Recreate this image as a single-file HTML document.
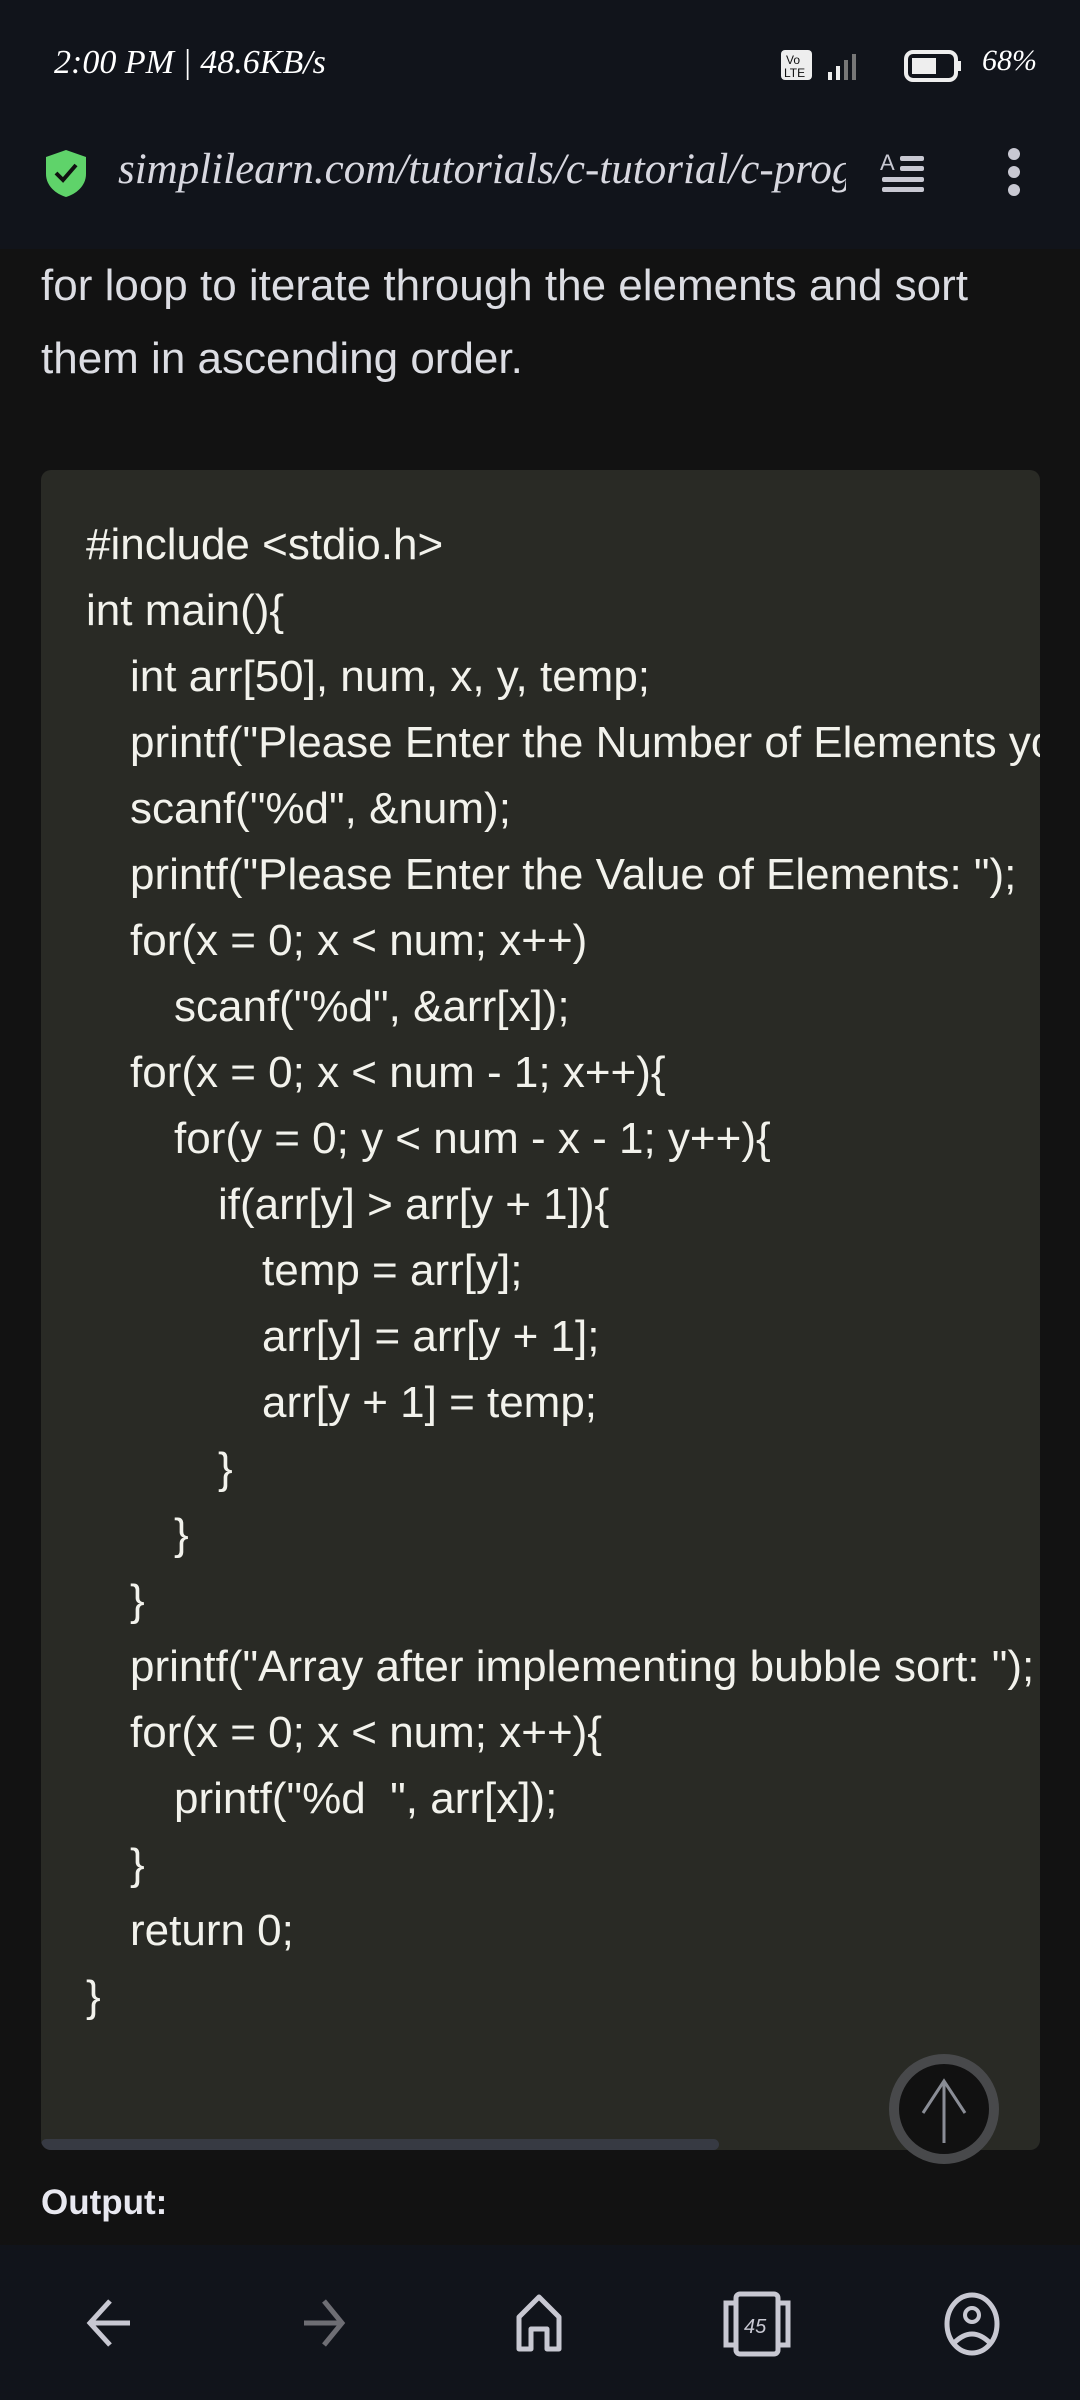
<!DOCTYPE html>
<html><head><meta charset="utf-8"><style>
*{margin:0;padding:0;box-sizing:border-box}
body{width:1080px;height:2400px;background:#121212;font-family:"Liberation Sans",sans-serif;position:relative;overflow:hidden;color:#e6e6ea}
.hdr{position:absolute;left:0;top:0;width:1080px;height:249px;background:#11141b}
.st{position:absolute;top:44px;font-size:34px;font-style:italic;color:#fff;font-family:"Liberation Serif",serif}
.url{position:absolute;left:118px;top:145px;font-size:43px;font-style:italic;color:#d8d8e0;font-family:"Liberation Serif",serif;white-space:nowrap;width:728px;overflow:hidden}
.p{position:absolute;left:41px;font-size:44px;color:#dcdde3}
.code{position:absolute;left:41px;top:470px;width:999px;height:1680px;background:#292a25;border-radius:10px;overflow:hidden}
.cd{position:absolute;left:45px;top:42px;font-family:"Liberation Sans",sans-serif;font-size:44px;line-height:66px;color:#f2f2ec;white-space:nowrap}
.cd div{white-space:pre}
.i1{padding-left:44px}.i2{padding-left:88px}.i3{padding-left:132px}.i4{padding-left:176px}
.sb{position:absolute;left:0;bottom:0;width:678px;height:11px;background:#373a43;border-radius:6px}
.nav{position:absolute;left:0;top:2245px;width:1080px;height:155px;background:#11141b}
</style></head><body>
<div class="hdr">
<div class="st" style="left:54px">2:00 PM | 48.6KB/s</div>
<div class="st" style="left:982px;font-size:30px">68%</div>
<svg style="position:absolute;left:780px;top:46px" width="190" height="40">
<rect x="1" y="4" width="31" height="30" rx="4" fill="#eee"/><text x="6" y="18" font-size="12" font-family="Liberation Sans" fill="#111">Vo</text><text x="4" y="31" font-size="12" font-family="Liberation Sans" fill="#111">LTE</text>
<rect x="48" y="26" width="4" height="8" fill="#eee"/><rect x="56" y="20" width="4" height="14" fill="#eee"/><rect x="64" y="14" width="4" height="20" fill="#777"/><rect x="72" y="8" width="4" height="26" fill="#777"/>
<rect x="126" y="6" width="50" height="28" rx="7" fill="none" stroke="#eee" stroke-width="4"/><rect x="132" y="12" width="24" height="16" fill="#eee"/><rect x="178" y="15" width="3" height="10" fill="#eee"/>
</svg>
<svg style="position:absolute;left:44px;top:148px" width="44" height="50"><path d="M22 2 L42 9 V26 C42 38 32 46 22 49 C12 46 2 38 2 26 V9 Z" fill="#5fd36a"/><path d="M12 25 L19 32 L32 17" stroke="#111" stroke-width="4" fill="none"/></svg>
<div class="url">simplilearn.com/tutorials/c-tutorial/c-prog</div>
<svg style="position:absolute;left:880px;top:150px" width="48" height="46"><text x="0" y="20" font-size="22" font-family="Liberation Sans" fill="#c8c8d2">A</text><rect x="20" y="6" width="24" height="5" rx="2" fill="#c8c8d2"/><rect x="20" y="16" width="24" height="5" rx="2" fill="#c8c8d2"/><rect x="2" y="27" width="42" height="5" rx="2" fill="#c8c8d2"/><rect x="2" y="37" width="42" height="5" rx="2" fill="#c8c8d2"/></svg>
<svg style="position:absolute;left:1000px;top:146px" width="30" height="54"><circle cx="14" cy="8" r="6" fill="#c8c8d2"/><circle cx="14" cy="26" r="6" fill="#c8c8d2"/><circle cx="14" cy="44" r="6" fill="#c8c8d2"/></svg>
</div>
<div class="p" style="top:261px">for loop to iterate through the elements and sort</div>
<div class="p" style="top:334px">them in ascending order.</div>
<div class="code"><div class="cd"><div>#include &lt;stdio.h&gt;</div><div>int main(){</div><div class="i1">int arr[50], num, x, y, temp;</div><div class="i1">printf("Please Enter the Number of Elements you want in the array: ");</div><div class="i1">scanf("%d", &amp;num);</div><div class="i1">printf("Please Enter the Value of Elements: ");</div><div class="i1">for(x = 0; x &lt; num; x++)</div><div class="i2">scanf("%d", &amp;arr[x]);</div><div class="i1">for(x = 0; x &lt; num - 1; x++){</div><div class="i2">for(y = 0; y &lt; num - x - 1; y++){</div><div class="i3">if(arr[y] &gt; arr[y + 1]){</div><div class="i4">temp = arr[y];</div><div class="i4">arr[y] = arr[y + 1];</div><div class="i4">arr[y + 1] = temp;</div><div class="i3">}</div><div class="i2">}</div><div class="i1">}</div><div class="i1">printf("Array after implementing bubble sort: ");</div><div class="i1">for(x = 0; x &lt; num; x++){</div><div class="i2">printf("%d  ", arr[x]);</div><div class="i1">}</div><div class="i1">return 0;</div><div>}</div></div><div class="sb"></div></div>
<svg style="position:absolute;left:888px;top:2053px" width="112" height="112"><circle cx="56" cy="56" r="50" fill="#111" stroke="#48494b" stroke-width="10"/><path d="M56 90 V28 M35 60 L56 28 L77 60" stroke="#8a8d96" stroke-width="3" fill="none"/></svg>
<div style="position:absolute;left:41px;top:2183px;font-size:35px;font-weight:bold;color:#e8e8f0">Output:</div>
<div class="nav">
<svg style="position:absolute;left:80px;top:50px" width="60" height="56"><path d="M50 28 H10 M30 6 L10 28 L30 50" stroke="#c8c8d2" stroke-width="5" fill="none"/></svg>
<svg style="position:absolute;left:296px;top:50px" width="60" height="56"><path d="M8 28 H46 M28 6 L46 28 L28 50" stroke="#6e6e74" stroke-width="5" fill="none"/></svg>
<svg style="position:absolute;left:514px;top:48px" width="50" height="60"><path d="M5 56 V24 L25 4 L45 24 V56 H33 V36 H17 V56 Z" stroke="#c8c8d2" stroke-width="5" fill="none" stroke-linejoin="round"/></svg>
<svg style="position:absolute;left:722px;top:46px" width="70" height="66"><rect x="14" y="3" width="42" height="60" rx="4" stroke="#c8c8d2" stroke-width="5" fill="none"/><path d="M14 12 H4 V54 H14 M56 12 H66 V54 H56" stroke="#c8c8d2" stroke-width="5" fill="none"/><text x="22" y="42" font-size="20" font-style="italic" font-family="Liberation Sans" fill="#c8c8d2">45</text></svg>
<svg style="position:absolute;left:942px;top:46px" width="60" height="66"><ellipse cx="30" cy="33" rx="25" ry="29" stroke="#c8c8d2" stroke-width="5" fill="none"/><circle cx="30" cy="24" r="7" stroke="#c8c8d2" stroke-width="4" fill="none"/><path d="M12 52 Q30 34 48 52" stroke="#c8c8d2" stroke-width="5" fill="none"/></svg>
</div>
</body></html>
